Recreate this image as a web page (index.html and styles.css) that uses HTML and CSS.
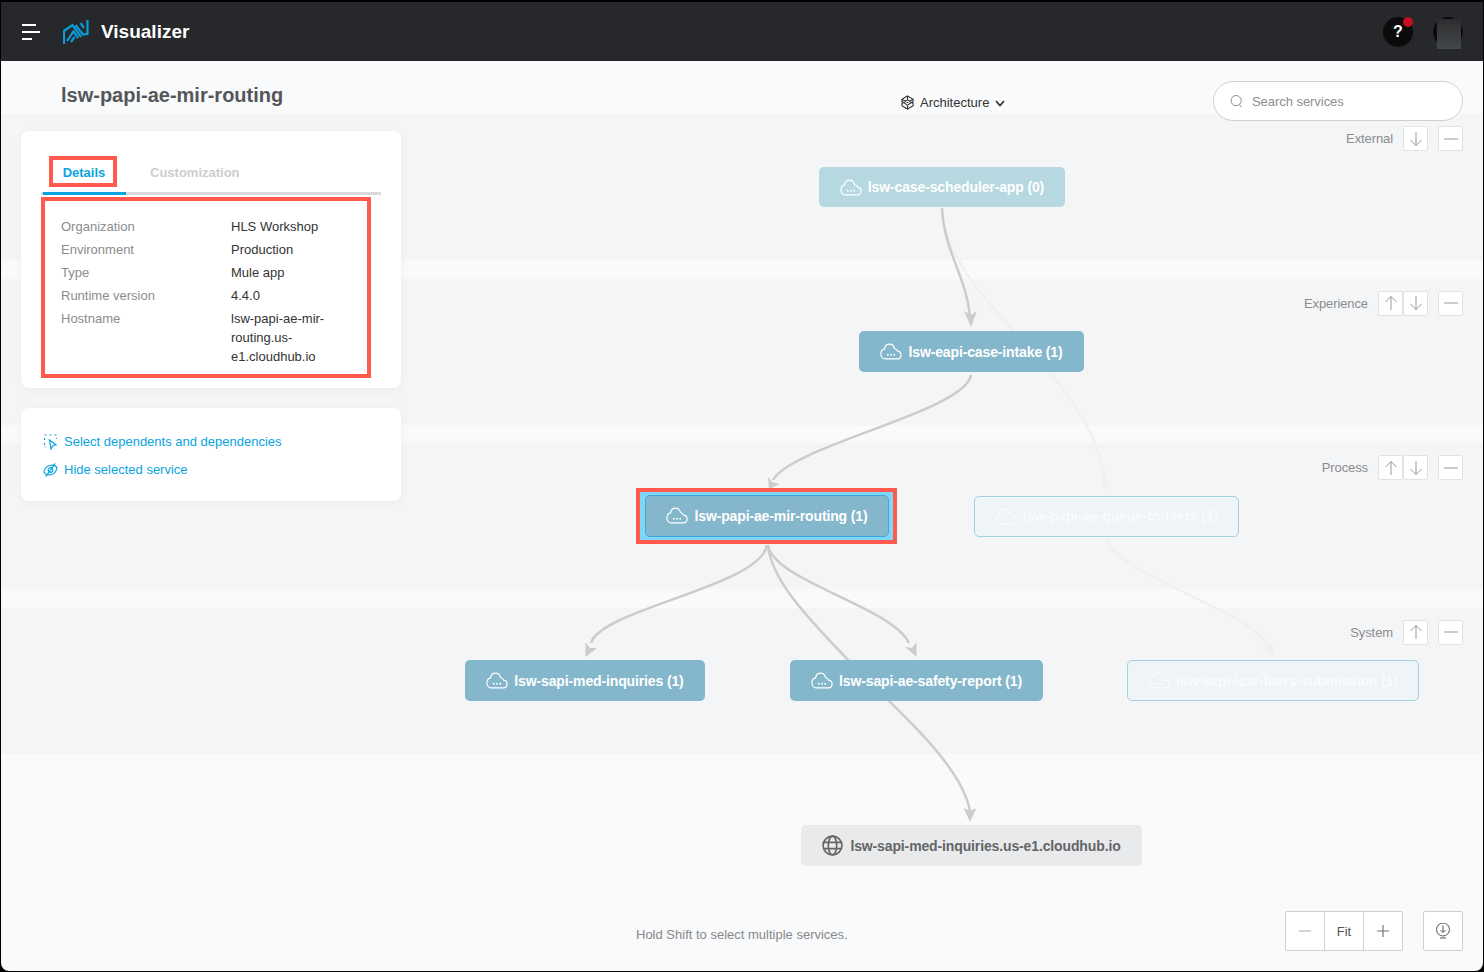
FILE: index.html
```html
<!DOCTYPE html>
<html lang="en">
<head>
<meta charset="utf-8">
<title>Visualizer</title>
<link rel="stylesheet" href="styles.css">
</head>
<body>
<svg class="defs" width="0" height="0" aria-hidden="true">
  <defs>
    <symbol id="cloud" viewBox="0 0 24 18">
      <path d="M5.500 17h13.500c2.500 0 4-1.900 4-4.200 0-2.300-1.600-4-3.800-4.200C18.700 7 17.500 6 16 6c-.8-3-3-5-5.500-5C7.500 1 5.300 3.300 5 6.200 2.700 6.700 1 8.800 1 11.500 1 14.600 3 17 5.500 17z" fill="none" stroke="currentColor" stroke-width="1.300"/>
      <circle cx="8.500" cy="12.500" r="1" fill="currentColor"/>
      <circle cx="12" cy="12.500" r="1" fill="currentColor"/>
      <circle cx="15.500" cy="12.500" r="1" fill="currentColor"/>
    </symbol>
    <symbol id="up" viewBox="0 0 14 16"><path d="M7 15V1.500M1.500 7 7 1.500 12.500 7" fill="none" stroke="currentColor" stroke-width="1"/></symbol>
    <symbol id="down" viewBox="0 0 14 16"><path d="M7 1v13.500M1.500 9 7 14.500 12.500 9" fill="none" stroke="currentColor" stroke-width="1"/></symbol>
    <symbol id="minus" viewBox="0 0 14 16"><path d="M0 8h14" fill="none" stroke="currentColor" stroke-width="1"/></symbol>
  </defs>
</svg>
<div class="app">
  <header class="topbar">
    <div class="brand">
      <span class="burger"><i class="b1"></i><i class="b2"></i><i class="b3"></i></span>
      <svg class="logo" viewBox="0 0 26 24" fill="none" stroke="#0b9dd9" stroke-width="2.200">
        <path d="M1 24V11L9.500 5 18 17"/>
        <path d="M4 21 10.500 11.500 15 18"/>
        <path d="M8 22l3.500-5"/>
        <path d="M12.500 5 20 14.500 24 14"/>
        <path d="M17.500 3 21 8"/>
        <path d="M24.500 0V15"/>
      </svg>
      <span class="brand-name">Visualizer</span>
    </div>
    <div class="top-actions">
      <span class="help">?<i class="dot"></i></span>
      <span class="avatar"><i></i></span>
    </div>
  </header>

  <main class="stage">
    <div class="toolbar">
      <h1 class="page-title">lsw-papi-ae-mir-routing</h1>
      <div class="view-switch">
        <svg class="arch-icon" viewBox="0 0 16 16" fill="none" stroke="#333" stroke-width="1.100"><path d="M8 1l6 3.500V7l-2 1 2 1v2.500L8 15l-6-3.500V9l2-1-2-1V4.500z"/><path d="M8 5l4 3-4 3-4-3zM2 4.500 8 8l6-3.500M8 1v4M8 11v4"/></svg>
        <span>Architecture</span>
        <svg class="chev" viewBox="0 0 10 7" fill="none" stroke="#333" stroke-width="1.800"><path d="M1 1l4 4.500L9 1"/></svg>
      </div>
      <label class="search">
        <svg class="search-icon" viewBox="0 0 16 16" fill="none" stroke="#888" stroke-width="1.100"><circle cx="7" cy="7" r="5.800"/><path d="M11 11.500l2 3"/></svg>
        <span>Search services</span>
      </label>
    </div>

    <div class="bands">
      <section class="band">
        <span class="band-label">External</span>
        <div class="btn-group"><button class="tool"><svg><use href="#down"/></svg></button></div>
        <button class="tool"><svg><use href="#minus"/></svg></button>
      </section>
      <section class="band">
        <span class="band-label">Experience</span>
        <div class="btn-group"><button class="tool"><svg><use href="#up"/></svg></button><button class="tool"><svg><use href="#down"/></svg></button></div>
        <button class="tool"><svg><use href="#minus"/></svg></button>
      </section>
      <section class="band">
        <span class="band-label">Process</span>
        <div class="btn-group"><button class="tool"><svg><use href="#up"/></svg></button><button class="tool"><svg><use href="#down"/></svg></button></div>
        <button class="tool"><svg><use href="#minus"/></svg></button>
      </section>
      <section class="band">
        <span class="band-label">System</span>
        <div class="btn-group"><button class="tool"><svg><use href="#up"/></svg></button></div>
        <button class="tool"><svg><use href="#minus"/></svg></button>
      </section>
    </div>

    <svg class="edges" viewBox="0 0 1482 910" fill="none">
      <g stroke="#eff0f2" stroke-width="2.500" fill="none">
        <path d="M941 147C945 240 1090 310 1104 420"/>
        <path d="M1106 477C1108 510 1250 550 1268 585"/>
      </g>
      <g fill="#eff0f2">
        <path d="M1098.500 418l6.500 13 5.500-13-5.500 3z"/>
        <path d="M1260 586l12 10v-14l-5 3z"/>
      </g>
      <g stroke="#cbcccd" stroke-width="2.500" fill="none">
        <path d="M941 147C943 190 965 215 969 255"/>
        <path d="M970 314C965 350 790 385 772 419"/>
        <path d="M766 484C760 525 600 548 590 582"/>
        <path d="M767 484C772 520 890 545 908 582"/>
        <path d="M767 484C770 520 810 560 847 599C885 640 960 700 969 750"/>
      </g>
      <g fill="#cbcccd">
        <path d="M963 250l7 16 6-16-6 4z"/>
        <path d="M767 416l1 12 11-5-8-2z"/>
        <path d="M584.500 581v15l11.500-9-7 0z"/>
        <path d="M915.500 581v15l-11.500-10 7 1z"/>
        <path d="M962.500 747l6.500 14 6.500-14-6.500 3z"/>
      </g>
    </svg>

    <div class="node node-scheduler dim"><svg class="cloud"><use href="#cloud"/></svg><span>lsw-case-scheduler-app (0)</span></div>
    <div class="node node-intake"><svg class="cloud"><use href="#cloud"/></svg><span>lsw-eapi-case-intake (1)</span></div>
    <div class="mark mark-node"><div class="node node-routing"><svg class="cloud"><use href="#cloud"/></svg><span>lsw-papi-ae-mir-routing (1)</span></div></div>
    <div class="node node-queue ghost"><svg class="cloud"><use href="#cloud"/></svg><span>lsw-papi-ae-queue-to-faers (1)</span></div>
    <div class="node node-inquiries"><svg class="cloud"><use href="#cloud"/></svg><span>lsw-sapi-med-inquiries (1)</span></div>
    <div class="node node-safety"><svg class="cloud"><use href="#cloud"/></svg><span>lsw-sapi-ae-safety-report (1)</span></div>
    <div class="node node-icsr ghost"><svg class="cloud"><use href="#cloud"/></svg><span>lsw-sapi-icsr-faers-submission (1)</span></div>
    <div class="node node-global">
      <svg class="globe" viewBox="0 0 20 20" fill="none" stroke="#666" stroke-width="1.600"><circle cx="10" cy="10" r="9"/><ellipse cx="10" cy="10" rx="4" ry="9"/><path d="M1 7h18M1 13h18"/></svg>
      <span>lsw-sapi-med-inquiries.us-e1.cloudhub.io</span>
    </div>

    <aside class="sidebar">
      <div class="card card-details">
        <div class="tabs">
          <span class="tab tab-active"><b class="mark mark-tab">Details</b></span>
          <span class="tab">Customization</span>
        </div>
        <dl class="mark mark-props">
          <dt>Organization</dt><dd>HLS Workshop</dd>
          <dt>Environment</dt><dd>Production</dd>
          <dt>Type</dt><dd>Mule app</dd>
          <dt>Runtime version</dt><dd>4.4.0</dd>
          <dt>Hostname</dt><dd class="multi">lsw-papi-ae-mir-<br>routing.us-<br>e1.cloudhub.io</dd>
        </dl>
      </div>
      <div class="card card-actions">
        <a class="action">
          <svg viewBox="0 0 14 16" fill="none" stroke="#0aa3e0" stroke-width="1.200"><path d="M1 1h2M6 1h2M11 1h2M1 4v2M13 4v1M1 9v2M1 13h1"/><path d="M6 6l6.500 5-3 .5L7.500 15z"/></svg>
          <span>Select dependents and dependencies</span>
        </a>
        <a class="action">
          <svg viewBox="0 0 16 16" fill="none" stroke="#0aa3e0" stroke-width="1.200"><path d="M1 10c1-4 4-6.500 7-7 3-.5 6 .5 7 3-1 4-4 6.500-7 7-3 .5-6-.5-7-3z"/><circle cx="8" cy="8" r="2.500"/><path d="M13 1 3 15"/></svg>
          <span>Hide selected service</span>
        </a>
      </div>
    </aside>

    <p class="hint">Hold Shift to select multiple services.</p>

    <div class="zoom-bar">
      <div class="zoom-group">
        <button class="zoom-btn"><svg viewBox="0 0 14 14" fill="none" stroke="#aaa" stroke-width="1"><path d="M1 7h12"/></svg></button>
        <button class="zoom-btn fit">Fit</button>
        <button class="zoom-btn"><svg viewBox="0 0 14 14" fill="none" stroke="#777" stroke-width="1.200"><path d="M1 7h12M7 1v12"/></svg></button>
      </div>
      <button class="zoom-btn solo"><svg viewBox="0 0 16 16" fill="none" stroke="#555" stroke-width="1"><circle cx="8" cy="6.500" r="6.500"/><path d="M8 2.500v6.500M5.500 7 8 9.500 10.500 7M5 15h6"/></svg></button>
    </div>
  </main>
</div>
</body>
</html>
```
FILE: styles.css
```css
* { box-sizing: border-box; }
html, body { margin: 0; height: 100%; }
body { background: #000; font-family: "Liberation Sans", Arial, sans-serif; overflow: hidden; }
.defs { position: absolute; }
.app {
  margin: 2px 1px 1px;
  height: 969px;
  background: #f9fafc;
  border-radius: 0 0 8px 8px;
  display: flex;
  flex-direction: column;
  overflow: hidden;
}
.topbar {
  flex: 0 0 59px;
  background: #26282b;
  display: flex;
  justify-content: space-between;
  align-items: center;
  padding: 0 20px 0 21px;
}
.brand { display: flex; align-items: center; }
.burger { display: flex; flex-direction: column; gap: 5px; width: 18px; }
.burger i { display: block; height: 2px; background: #fff; }
.b1 { width: 14px; }
.b2 { width: 18px; }
.b3 { width: 10px; }
.logo { width: 26px; height: 24px; margin-left: 23px; }
.brand-name { margin-left: 12px; font-size: 19px; font-weight: 700; color: #fff; }
.top-actions { display: flex; align-items: center; gap: 20px; }
.help {
  position: relative;
  width: 30px; height: 30px;
  border-radius: 50%;
  background: #0b0b0c;
  color: #fff;
  font-weight: 700;
  font-size: 16px;
  display: flex; align-items: center; justify-content: center;
}
.dot { position: absolute; top: 0; right: 0; width: 10px; height: 10px; border-radius: 50%; background: #c40d1e; }
.avatar { position: relative; width: 30px; height: 30px; border-radius: 50%; background: #0b0b0c; }
.avatar i { position: absolute; left: 4px; top: 2px; width: 24px; height: 30px; background: linear-gradient(#2c2d2f, #45484a); }

.stage { flex: 1; position: relative; }
.toolbar { height: 53px; display: flex; align-items: flex-start; position: relative; z-index: 3; }
.page-title { margin: 21px 0 0 60px; font-size: 20px; line-height: 26px; font-weight: 700; color: #555658; width: 839px; }
.view-switch { margin-top: 34px; display: flex; align-items: center; gap: 5px; font-size: 13px; line-height: 16px; color: #333; }
.arch-icon { width: 15px; height: 15px; margin-top: -1px; }
.chev { width: 10px; height: 7px; margin-left: 1px; }
.search {
  margin: 20px 20px 0 auto;
  width: 250px; height: 40px;
  border: 1px solid #cfcfd2;
  border-radius: 20px;
  background: #fff;
  display: flex; align-items: center; gap: 8px;
  padding-left: 16px;
  font-size: 13px; letter-spacing: -.05px; color: #8d8e90;
}
.search-icon { width: 14px; height: 15px; }

.bands { display: grid; grid-template-rows: repeat(4, 146px); row-gap: 18.500px; }
.band {
  background: #f4f5f7;
  display: flex;
  justify-content: flex-end;
  align-items: flex-start;
  padding: 12px 20px 0 0;
}
.band-label { font-size: 13px; letter-spacing: -.1px; line-height: 25px; color: #8b8c8e; margin-right: 10px; }
.btn-group { display: flex; margin-right: 10px; }
.tool {
  width: 25px; height: 25px;
  padding: 0;
  background: #fff;
  border: 1px solid #e1e2e4;
  border-radius: 2px;
  color: #999;
  display: flex; align-items: center; justify-content: center;
}
.tool svg { width: 14px; height: 16px; }

.edges { position: absolute; left: 0; top: 0; width: 1482px; height: 910px; }

.node {
  position: absolute;
  height: 41px;
  border-radius: 5px;
  background: #85b7cc;
  color: #fff;
  font-size: 14px;
  font-weight: 700;
  letter-spacing: -.13px;
  display: flex; align-items: center; justify-content: center;
  gap: 6px;
  white-space: nowrap;
}
.cloud { width: 22px; height: 17px; }
.dim { background: #b6d8e0; }
.ghost { background: #eef4f7; border: 1px solid #a5cfe2; color: #f9fbfc; }
.mark { border: 4px solid #ff5a4d; }
.mark-node { position: absolute; left: 635px; top: 427px; width: 261px; height: 56px; background: #7fd6f6; padding: 3px 4px 3px 5px; }
.node-routing { position: static; width: 100%; height: 100%; border: 1px solid #3aa9d8; padding-bottom: 1px; }
.node-scheduler { left: 818px; top: 106px; width: 246px; height: 40px; }
.node-intake { left: 858px; top: 270px; width: 225px; }
.node-queue { left: 973px; top: 435px; width: 265px; padding-bottom: 1px; }
.node-inquiries { left: 464px; top: 599px; width: 240px; }
.node-safety { left: 789px; top: 599px; width: 253px; }
.node-icsr { left: 1126px; top: 599px; width: 292px; }
.node-global { left: 800px; top: 764px; width: 341px; background: #e9eaec; color: #646567; gap: 7px; }
.globe { width: 21px; height: 21px; }

.sidebar { position: absolute; left: 20px; top: 70px; width: 380px; display: flex; flex-direction: column; gap: 20px; }
.card { background: #fff; border-radius: 8px; box-shadow: 0 2px 10px rgba(0,0,0,.04); }
.card-details { height: 257px; padding: 25px 20px 0; }
.tabs { display: flex; height: 39px; border-bottom: 3px solid #d9dadc; position: relative; }
.tab { font-size: 13px; font-weight: 700; color: #cdcecf; }
.tab:nth-child(2) { margin-left: 24px; padding-top: 9px; line-height: 15px; }
.tab-active { width: 83px; margin: 0 0 -3px 2px; border-bottom: 3px solid #0aa3e0; padding-left: 6px; }
.mark-tab { display: block; width: 68px; height: 31px; line-height: 25px; padding-left: 2px; text-align: center; color: #0aa3e0; }
.mark-props {
  margin: 2px 10px 0 0;
  width: 330px; height: 181px;
  padding: 14px 15px 0 16px;
  display: grid;
  grid-template-columns: 170px 1fr;
  grid-auto-rows: 23px;
  font-size: 13px;
}
.mark-props dt { color: #8b8c8e; line-height: 23px; }
.mark-props dd { margin: 0; color: #333; line-height: 23px; }
.mark-props dd.multi { line-height: 19px; padding-top: 2px; }
.card-actions { height: 93px; padding: 25px 23px 0; display: flex; flex-direction: column; gap: 10px; }
.action { display: flex; align-items: center; gap: 6px; font-size: 13px; line-height: 18px; color: #0aa3e0; }
.action svg { width: 15px; height: 16px; margin-left: -1px; }

.hint { position: absolute; left: 635px; top: 866px; margin: 0; font-size: 13px; line-height: 15px; color: #87888a; }
.zoom-bar { position: absolute; right: 20px; top: 850px; display: flex; gap: 20px; }
.zoom-group { display: flex; }
.zoom-btn {
  width: 40px; height: 40px; padding: 0;
  background: #fff;
  border: 1px solid #cfd0d2;
  margin-left: -1px;
  font: 13px "Liberation Sans", Arial, sans-serif;
  color: #555;
  display: flex; align-items: center; justify-content: center;
}
.zoom-group .zoom-btn:first-child { margin-left: 0; border-radius: 2px 0 0 2px; }
.zoom-group .zoom-btn:last-child { border-radius: 0 2px 2px 0; }
.zoom-btn svg { width: 14px; height: 14px; }
.solo { margin-left: 0; border-radius: 2px; }
.solo svg { width: 16px; height: 16px; }
```
